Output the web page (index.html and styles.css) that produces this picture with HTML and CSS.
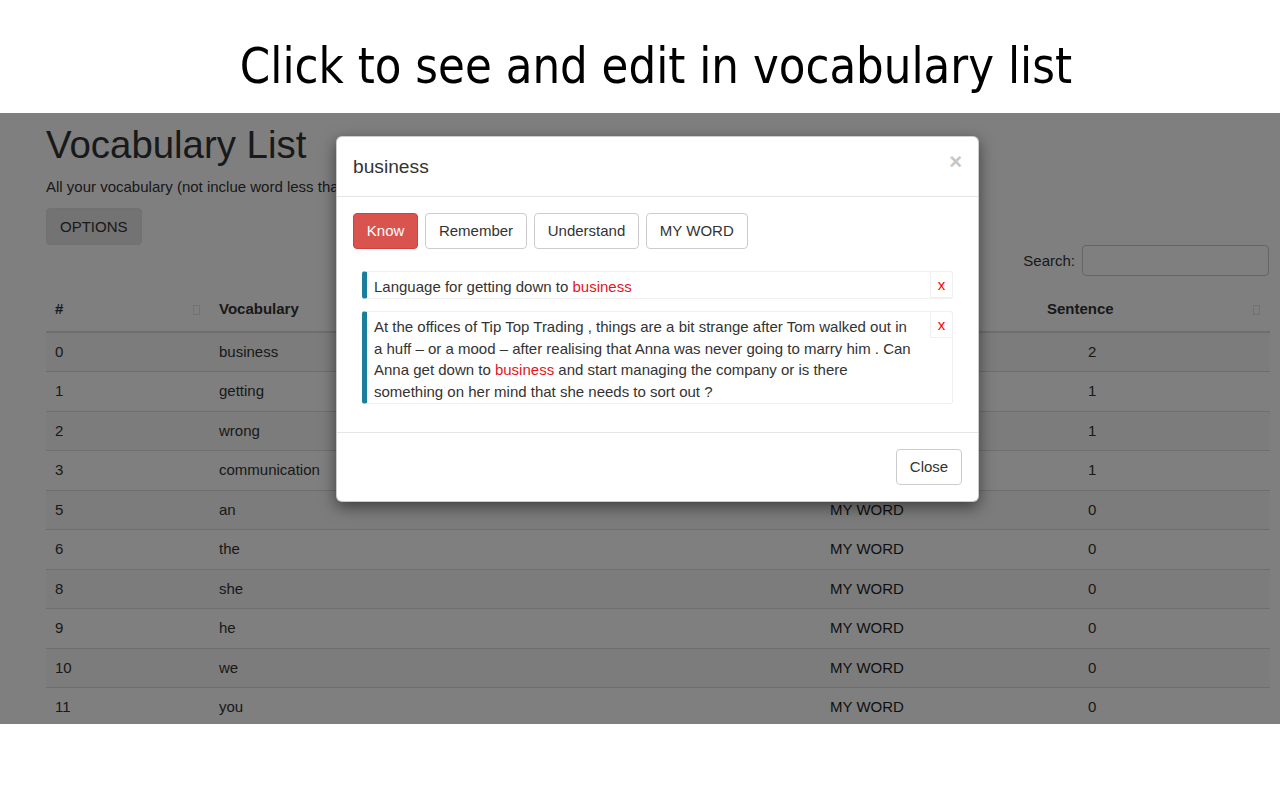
FILE: index.html
```html
<!DOCTYPE html>
<html lang="en">
<head>
<meta charset="utf-8">
<title>Vocabulary List</title>
<link rel="stylesheet" href="styles.css">
</head>
<body>
<div class="caption"><span class="caption-text">Click to see and edit in vocabulary list</span></div>

<div class="shot">
  <div class="page">
    <h1 class="page-title">Vocabulary List</h1>
    <p class="page-lead">All your vocabulary (not inclue word less than 3 characters)</p>
    <button class="btn btn-options" type="button">OPTIONS</button>
    <div class="search-row">
      <label class="search-label" for="q">Search:</label>
      <input class="search-input" id="q" type="text">
    </div>
    <table class="vocab-table">
      <colgroup>
        <col class="c-num"><col class="c-word"><col class="c-status"><col class="c-sent">
      </colgroup>
      <thead>
        <tr>
          <th><div class="th-inner"><span>#</span><span class="sort-ico"></span></div></th>
          <th><div class="th-inner"><span>Vocabulary</span><span class="sort-ico"></span></div></th>
          <th><div class="th-inner"><span>Status</span></div></th>
          <th><div class="th-inner"><span>Sentence</span><span class="sort-ico"></span></div></th>
        </tr>
      </thead>
      <tbody>
        <tr><td>0</td><td>business</td><td>Know</td><td class="sent">2</td></tr>
        <tr><td>1</td><td>getting</td><td>MY WORD</td><td class="sent">1</td></tr>
        <tr><td>2</td><td>wrong</td><td>MY WORD</td><td class="sent">1</td></tr>
        <tr><td>3</td><td>communication</td><td>MY WORD</td><td class="sent">1</td></tr>
        <tr><td>5</td><td>an</td><td class="status">MY WORD</td><td class="sent">0</td></tr>
        <tr><td>6</td><td>the</td><td class="status">MY WORD</td><td class="sent">0</td></tr>
        <tr><td>8</td><td>she</td><td class="status">MY WORD</td><td class="sent">0</td></tr>
        <tr><td>9</td><td>he</td><td class="status">MY WORD</td><td class="sent">0</td></tr>
        <tr><td>10</td><td>we</td><td class="status">MY WORD</td><td class="sent">0</td></tr>
        <tr><td>11</td><td>you</td><td class="status">MY WORD</td><td class="sent">0</td></tr>
      </tbody>
    </table>
  </div>

  <div class="backdrop"></div>

  <div class="modal">
    <div class="modal-header">
      <h4 class="modal-title">business</h4>
      <span class="modal-close">&times;</span>
    </div>
    <div class="modal-body">
      <div class="level-row">
        <button class="btn btn-danger" type="button">Know</button>
        <button class="btn btn-default" type="button">Remember</button>
        <button class="btn btn-default" type="button">Understand</button>
        <button class="btn btn-default" type="button">MY WORD</button>
      </div>
      <div class="sentences">
        <div class="sentence">
          <div class="sentence-text">Language for getting down to <span class="hl">business</span></div>
          <div class="sentence-del">x</div>
        </div>
        <div class="sentence">
          <div class="sentence-text">At the offices of Tip Top Trading , things are a bit strange after Tom walked out in a huff – or a mood – after realising that Anna was never going to marry him . Can Anna get down to <span class="hl">business</span> and start managing the company or is there something on her mind that she needs to sort out ?</div>
          <div class="sentence-del">x</div>
        </div>
      </div>
    </div>
    <div class="modal-footer">
      <button class="btn btn-default" type="button">Close</button>
    </div>
  </div>
</div>
</body>
</html>
```

FILE: styles.css
```css
* { box-sizing: border-box; }

html, body {
  margin: 0;
  padding: 0;
  background: #ffffff;
}

body {
  width: 1280px;
  height: 800px;
  overflow: hidden;
  font-family: "Liberation Sans", Arial, sans-serif;
  color: #333333;
}

/* ---------- caption ---------- */
.caption {
  height: 113px;
  padding: 34px 0 0 32px;
  line-height: 64px;
  text-align: center;
  background: #ffffff;
}

.caption-text {
  display: inline-block;
  font-family: "DejaVu Sans Condensed", "DejaVu Sans", sans-serif;
  font-size: 50px;
  color: #000000;
  transform: scaleX(0.97);
  transform-origin: center;
  white-space: nowrap;
}

/* ---------- screenshot area ---------- */
.shot {
  position: relative;
  height: 611px;
  overflow: hidden;
  background: #ffffff;
}

.page {
  padding: 0 10px 0 46px;
  font-size: 15px;
  line-height: 21.3px;
}

.page-title {
  margin: 0;
  padding-top: 11px;
  font-size: 38.4px;
  line-height: 42px;
  font-weight: 400;
  color: #333333;
}

.page-lead {
  margin: 10px 0 0;
  white-space: nowrap;
}

.btn {
  display: inline-block;
  font-family: "Liberation Sans", Arial, sans-serif;
  font-size: 15px;
  line-height: 21.3px;
  padding: 6.4px 12.8px;
  border: 1px solid #cccccc;
  border-radius: 4px;
  background: #ffffff;
  color: #333333;
  white-space: nowrap;
  cursor: pointer;
}

.btn-options {
  margin-top: 11px;
  padding: 7px 13px;
  height: 37px;
  background: #e6e6e6;
  border-color: #e2e2e2;
}

.search-row {
  display: flex;
  justify-content: flex-end;
  align-items: center;
  gap: 7px;
}

.search-label {
  font-size: 15px;
}

.search-input {
  width: 187px;
  height: 31px;
  margin-right: 1px;
  border: 1px solid #cccccc;
  border-radius: 4px;
  background: #ffffff;
}

/* ---------- table ---------- */
.vocab-table {
  width: 100%;
  margin-top: 13px;
  border-collapse: collapse;
  table-layout: fixed;
}

.c-num { width: 164px; }
.c-word { width: 611px; }
.c-status { width: 217px; }
.c-sent { width: 232px; }

.vocab-table th {
  padding: 9px 9px 10px;
  line-height: 22.5px;
  font-weight: 700;
  text-align: left;
  border-bottom: 2px solid #dddddd;
}

.th-inner {
  display: flex;
  justify-content: space-between;
  align-items: center;
}

.sort-ico {
  width: 7px;
  height: 10px;
  margin-right: 1px;
  border: 1px solid #e4e4e4;
}

.vocab-table td {
  padding: 8px 9px;
  line-height: 22.5px;
  border-top: 1px solid #dddddd;
  white-space: nowrap;
}

.vocab-table tbody tr:nth-child(odd) {
  background: #f9f9f9;
}

.vocab-table td.sent {
  padding-left: 50px;
}

.vocab-table td.status {
  color: #1e1e1e;
}

/* ---------- backdrop + modal ---------- */
.backdrop {
  position: absolute;
  inset: 0;
  background: rgba(0, 0, 0, 0.5);
}

.modal {
  position: absolute;
  left: 336px;
  top: 23px;
  width: 643px;
  background: #ffffff;
  border: 1px solid rgba(0, 0, 0, 0.2);
  border-radius: 6px;
  box-shadow: 0 5px 15px rgba(0, 0, 0, 0.5);
  font-size: 15px;
  line-height: 21.6px;
  color: #333333;
}

.modal-header {
  display: flex;
  justify-content: space-between;
  align-items: flex-start;
  padding: 16px;
  border-bottom: 1px solid #e5e5e5;
}

.modal-title {
  margin: 0;
  font-size: 19.2px;
  line-height: 27px;
  font-weight: 400;
}

.modal-close {
  font-size: 22px;
  line-height: 22px;
  font-weight: 700;
  color: #c6c6c6;
  margin-top: -2px;
}

.modal-body {
  padding: 16px;
}

.level-row {
  display: flex;
  gap: 7px;
}

.btn-danger {
  background: #d9534f;
  border-color: #d43f3a;
  color: #ffffff;
}

.sentences {
  margin-top: 22px;
}

.sentence {
  display: flex;
  align-items: flex-start;
  margin: 0 9px 12px 9px;
  border: 1px solid #f0f0f0;
  border-left: 5px solid #1b7f9c;
  border-radius: 3px;
}

.sentence-text {
  flex: 1;
  padding: 4px 14px 0.5px 7px;
}

.sentence-del {
  width: 22px;
  height: 26px;
  line-height: 26px;
  text-align: center;
  color: #ff0000;
  border-left: 1px solid #f0f0f0;
  border-bottom: 1px solid #f0f0f0;
}

.hl {
  color: #e3161e;
}

.modal-footer {
  padding: 16px;
  border-top: 1px solid #e5e5e5;
  text-align: right;
}
```
